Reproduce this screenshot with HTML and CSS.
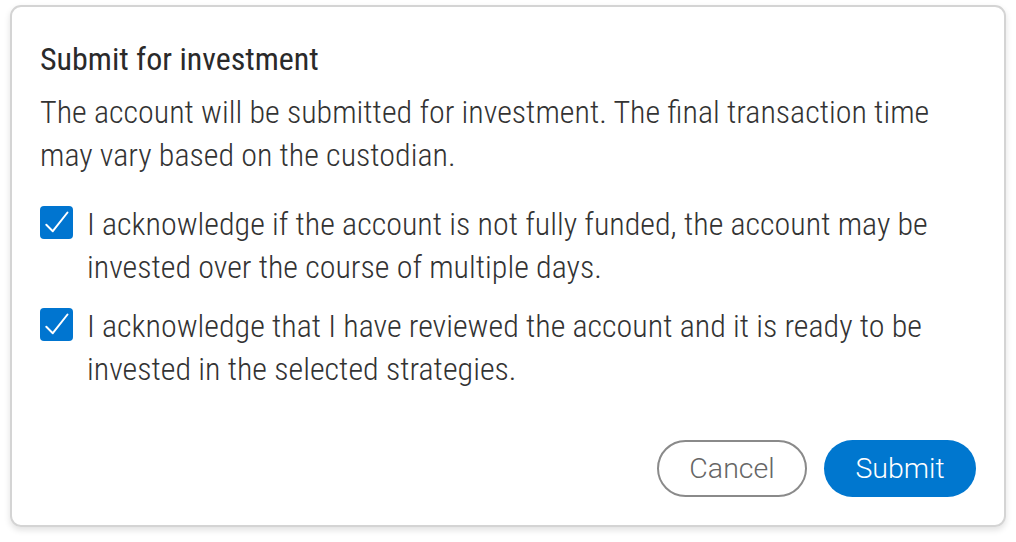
FILE: index.html
```html
<!DOCTYPE html>
<html>
<head>
<meta charset="utf-8">
<link rel="stylesheet" href="styles.css">
</head>
<body>
<div class="dialog">
  <h1 class="title">Submit for investment</h1>
  <p class="desc">The account will be submitted for investment. The final transaction time may vary based on the custodian.</p>
  <div class="checks">
    <label class="check">
      <span class="box"><svg viewBox="0 0 33 33" width="33" height="33"><path d="M6.3 18.8 L12.8 25.2 L27.5 6.5" fill="none" stroke="#fff" stroke-width="2" stroke-linecap="round" stroke-linejoin="round"/></svg></span>
      <span class="check-text">I acknowledge if the account is not fully funded, the account may be invested over the course of multiple days.</span>
    </label>
    <label class="check">
      <span class="box"><svg viewBox="0 0 33 33" width="33" height="33"><path d="M6.3 18.8 L12.8 25.2 L27.5 6.5" fill="none" stroke="#fff" stroke-width="2" stroke-linecap="round" stroke-linejoin="round"/></svg></span>
      <span class="check-text">I acknowledge that I have reviewed the account and it is ready to be invested in the selected strategies.</span>
    </label>
  </div>
  <div class="actions">
    <button class="btn btn-cancel">Cancel</button>
    <button class="btn btn-submit">Submit</button>
  </div>
</div>
</body>
</html>
```
FILE: styles.css
```css
html, body {
  margin: 0;
  padding: 0;
  background: #fff;
}
body {
  font-family: Roboto, "Noto Sans", sans-serif;
  font-stretch: condensed;
  padding: 5px 10px 0 10px;
  width: 1016px;
  height: 542px;
  box-sizing: border-box;
}
.dialog {
  width: 996px;
  height: 522px;
  box-sizing: border-box;
  border: 2px solid #d4d4d4;
  border-radius: 11px;
  box-shadow: 0 3px 6px rgba(0,0,0,0.12);
  padding: 32px 28px 0 28px;
  display: flex;
  flex-direction: column;
}
.title {
  margin: 0;
  font-size: 32px;
  font-weight: 400;
  color: #2a2a2a;
  line-height: 40px;
}
.desc {
  margin: 12px 0 0 0;
  font-size: 32px;
  font-weight: 300;
  color: #333;
  line-height: 43px;
}
.checks {
  margin-top: 26px;
  display: flex;
  flex-direction: column;
  gap: 16px;
}
.check {
  display: flex;
  align-items: flex-start;
  gap: 14px;
}
.box {
  flex: none;
  width: 33px;
  height: 33px;
  margin-top: 3px;
  background: #0075d0;
  border-radius: 4px;
  display: block;
}
.box svg { display: block; }
.check-text {
  font-size: 32px;
  font-weight: 300;
  color: #333;
  line-height: 43px;
}
.actions {
  margin-top: auto;
  margin-bottom: 28px;
  display: flex;
  justify-content: flex-end;
  gap: 17px;
}
.btn {
  height: 57px;
  border-radius: 29px;
  font-family: inherit;
  font-size: 28.5px;
  font-weight: 300;
  cursor: pointer;
}
.btn-cancel {
  width: 150px;
  background: #fff;
  border: 2px solid #8a8a8a;
  color: #666;
}
.btn-submit {
  width: 152px;
  background: #0077cf;
  border: none;
  color: #fff;
}
```
